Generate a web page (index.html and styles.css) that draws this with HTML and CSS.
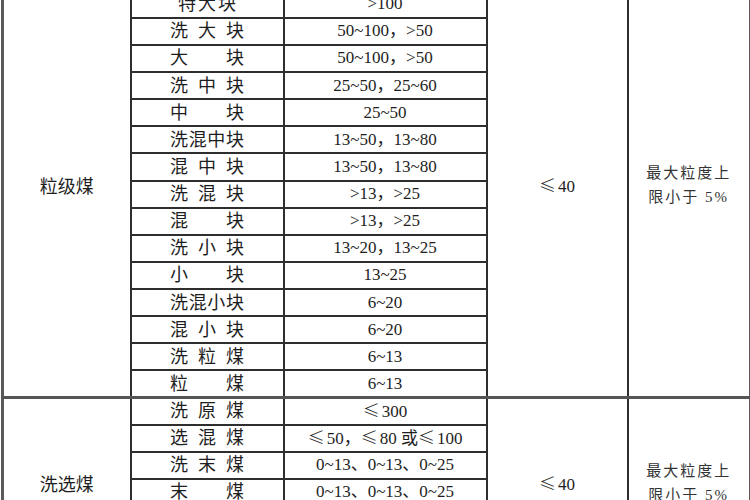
FILE: index.html
```html
<!DOCTYPE html>
<html lang="zh-CN">
<head>
<meta charset="utf-8">
<title>煤炭产品类别</title>
<link rel="stylesheet" href="styles.css">
</head>
<body>
<table class="grade">
  <colgroup>
    <col class="c-cat"><col class="c-name"><col class="c-size"><col class="c-ash"><col class="c-note">
  </colgroup>
  <tbody class="grp">
    <tr><td rowspan="16" class="cat"><span class="cat-text">粒级煤</span></td><td class="name"><span class="nm">洗特大块</span></td><td class="size">&gt;100</td><td rowspan="16" class="ash"><span class="ash-text"><span class="le">≤</span>40</span></td><td rowspan="16" class="note"><span class="note-text">最大粒度上<br>限小于 5%</span></td></tr>
    <tr><td class="name"><span class="nm nm-tight">特大块</span></td><td class="size">&gt;100</td></tr>
    <tr><td class="name"><span class="nm">洗大块</span></td><td class="size">50~100，&gt;50</td></tr>
    <tr><td class="name"><span class="nm">大块</span></td><td class="size">50~100，&gt;50</td></tr>
    <tr><td class="name"><span class="nm">洗中块</span></td><td class="size">25~50，25~60</td></tr>
    <tr><td class="name"><span class="nm">中块</span></td><td class="size">25~50</td></tr>
    <tr><td class="name"><span class="nm">洗混中块</span></td><td class="size">13~50，13~80</td></tr>
    <tr><td class="name"><span class="nm">混中块</span></td><td class="size">13~50，13~80</td></tr>
    <tr><td class="name"><span class="nm">洗混块</span></td><td class="size">&gt;13，&gt;25</td></tr>
    <tr><td class="name"><span class="nm">混块</span></td><td class="size">&gt;13，&gt;25</td></tr>
    <tr><td class="name"><span class="nm">洗小块</span></td><td class="size">13~20，13~25</td></tr>
    <tr><td class="name"><span class="nm">小块</span></td><td class="size">13~25</td></tr>
    <tr><td class="name"><span class="nm">洗混小块</span></td><td class="size">6~20</td></tr>
    <tr><td class="name"><span class="nm">混小块</span></td><td class="size">6~20</td></tr>
    <tr><td class="name"><span class="nm">洗粒煤</span></td><td class="size">6~13</td></tr>
    <tr><td class="name"><span class="nm">粒煤</span></td><td class="size">6~13</td></tr>
  </tbody>
  <tbody class="grp grp-next">
    <tr><td rowspan="6" class="cat"><span class="cat-text">洗选煤</span></td><td class="name"><span class="nm">洗原煤</span></td><td class="size"><span class="le">≤</span>300</td><td rowspan="6" class="ash"><span class="ash-text"><span class="le">≤</span>40</span></td><td rowspan="6" class="note"><span class="note-text">最大粒度上<br>限小于 5%</span></td></tr>
    <tr><td class="name"><span class="nm">选混煤</span></td><td class="size"><span class="le">≤</span>50，<span class="le">≤</span>80 或<span class="le">≤</span>100</td></tr>
    <tr><td class="name"><span class="nm">洗末煤</span></td><td class="size">0~13、0~13、0~25</td></tr>
    <tr><td class="name"><span class="nm">末煤</span></td><td class="size">0~13、0~13、0~25</td></tr>
    <tr><td class="name"><span class="nm">洗粉煤</span></td><td class="size">0~6、0~3</td></tr>
    <tr><td class="name"><span class="nm">粉煤</span></td><td class="size">0~6、0~3</td></tr>
  </tbody>
</table>
</body>
</html>
```

FILE: styles.css
```css
html, body {
  margin: 0;
  padding: 0;
  background: #ffffff;
  overflow: hidden;
}

body {
  font-family: "Liberation Serif", "Noto Sans CJK SC", serif;
  color: #1e1e1e;
}

.grade {
  border-collapse: collapse;
  table-layout: fixed;
  width: 748px;
  margin: -38px 0 0 1px;
  border: 3px solid #5a5a5a;
}

.c-cat { width: 128px; }
.c-name { width: 153px; }
.c-size { width: 203px; }
.c-ash { width: 141px; }
.c-note { width: 123px; }

.grade td {
  border: 2px solid #2e2e2e;
  padding: 0;
  text-align: center;
  vertical-align: middle;
  white-space: nowrap;
}

.grade tr {
  height: 27.14px;
}

.grp-next {
  border-top: 3px solid #555555;
}

.cat-text {
  display: inline-block;
  font-size: 18px;
  padding-top: 8px;
}

.nm {
  display: inline-block;
  width: 74px;
  font-size: 18px;
  line-height: 22px;
  text-align: justify;
  text-align-last: justify;
}

.nm-tight {
  width: 58px;
}

.size {
  font-size: 17px;
  line-height: 22px;
}

.le {
  font-family: "Noto Sans CJK SC", "DejaVu Sans", sans-serif;
  font-weight: 300;
  margin-right: 2px;
}

.ash-text {
  display: inline-block;
  font-size: 17px;
  padding-top: 8px;
}

.note-text {
  display: inline-block;
  font-size: 15px;
  line-height: 24px;
  letter-spacing: 2px;
  padding-top: 8px;
  color: #333333;
}
```
